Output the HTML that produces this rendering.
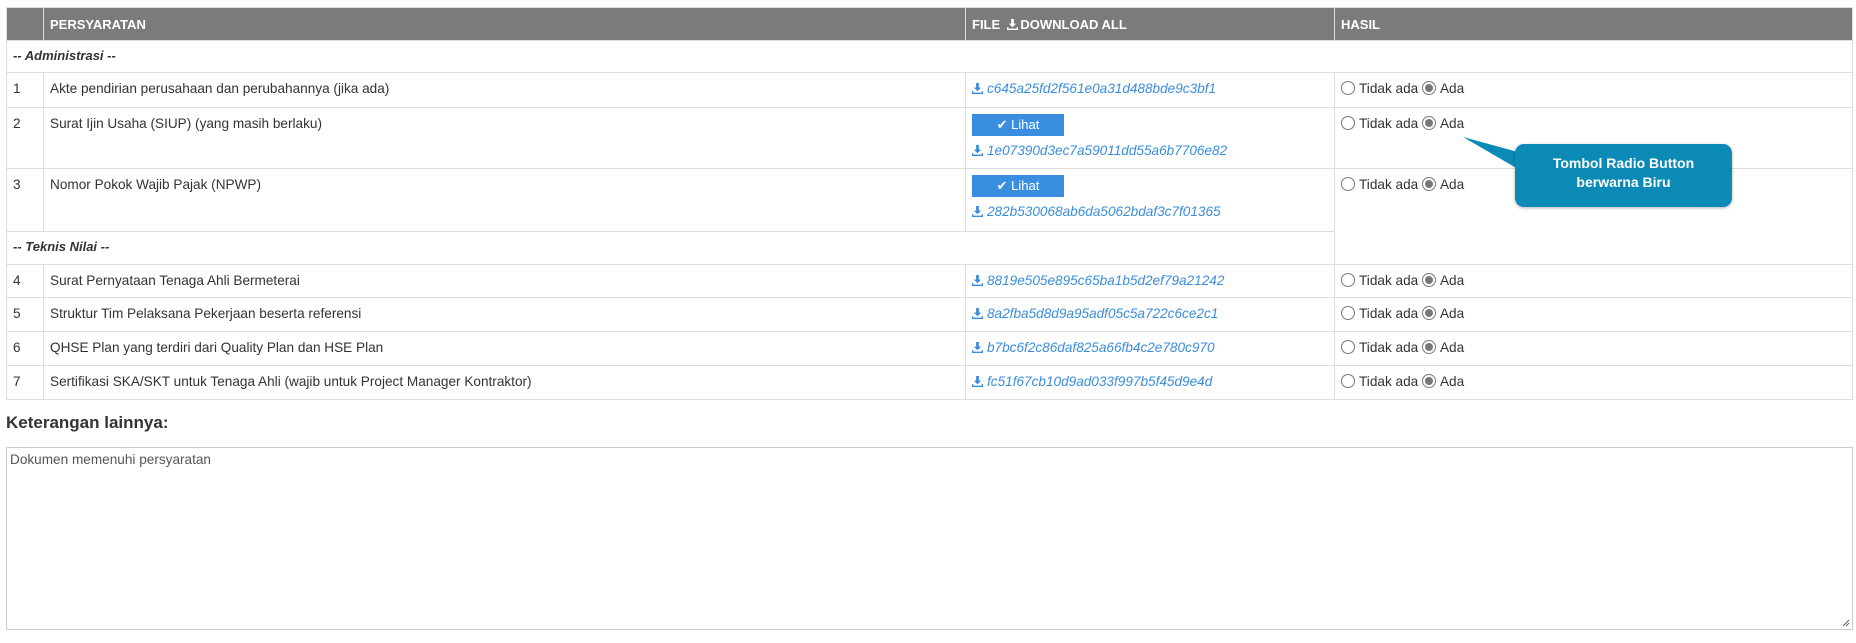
<!DOCTYPE html>
<html><head><meta charset="utf-8"><style>
*{box-sizing:border-box;margin:0;padding:0}
body{width:1856px;height:643px;background:#fff;font-family:"Liberation Sans",Arial,sans-serif;font-size:13.6px;color:#333;position:relative;overflow:hidden}
table{position:absolute;left:6px;top:7px;width:1847px;border-collapse:collapse;table-layout:fixed}
td,th{border:1px solid #ddd;padding:0 6px;vertical-align:top;text-align:left}
th{background:#7b7b7b;color:#fff;font-size:13px;font-weight:bold;height:33px;vertical-align:middle;border-color:#ddd}
td{padding-top:8px}
.sec td{font-weight:bold;font-style:italic;font-size:13px;padding-top:7px}
a{color:#3a8ddc;font-style:italic;text-decoration:none;font-size:13.6px}
.dl{display:inline-block;width:11px;height:11px;vertical-align:-1px;margin-right:4px}
.btn{display:block;width:92px;height:22px;background:#3a8ee0;color:#fff;font-size:13px;text-align:center;line-height:22px;margin:-2px 0 7px 0}
.r{display:inline-block;width:14px;height:14px;border:1px solid #777;border-radius:50%;vertical-align:-2px;margin-right:4px;position:relative;background:#fff}
.r.on::after{content:"";position:absolute;left:2px;top:2px;width:8px;height:8px;border-radius:50%;background:#777}
.hasil{padding-left:6px}
h4{position:absolute;left:6px;top:413px;font-size:17px;font-weight:bold;color:#333}
.ta{position:absolute;left:6px;top:447px;width:1847px;height:183px;border:1px solid #ccc;padding:4px 3px;color:#555;font-size:13.6px}
.tip{position:absolute;left:1515px;top:144px;width:217px;height:63px;background:#0b8ab6;border-radius:9px;color:#fff;font-weight:bold;font-size:14px;text-align:center;line-height:19px;padding-top:10px;box-shadow:0 1px 3px rgba(0,0,0,.3)}
</style></head><body>
<svg width="0" height="0" style="position:absolute"><defs><symbol id="d" viewBox="0 0 12 12"><path d="M4.5 0h3v5h2.5L6 9 2 5h2.5z M0 9h1.5v1.5h9V9H12v3H0z" fill="#3a8ddc"/></symbol></defs></svg>
<table>
<colgroup><col style="width:37px"><col style="width:922px"><col style="width:369px"><col></colgroup>
<tr><th></th><th>PERSYARATAN</th><th>FILE &nbsp;<svg class="dl" viewBox="0 0 12 12" style="margin-right:2px"><path d="M4.5 0h3v5h2.5L6 9 2 5h2.5z M0 9h1.5v1.5h9V9H12v3H0z" fill="#fff"/></svg>DOWNLOAD ALL</th><th>HASIL</th></tr>
<tr class="sec" style="height:32px"><td colspan="4">-- Administrasi --</td></tr>
<tr style="height:35px"><td>1</td><td>Akte pendirian perusahaan dan perubahannya (jika ada)</td><td><a><svg class="dl"><use href="#d"/></svg>c645a25fd2f561e0a31d488bde9c3bf1</a></td><td class="hasil"><span class="r"></span>Tidak ada <span class="r on"></span>Ada</td></tr>
<tr style="height:61px"><td>2</td><td>Surat Ijin Usaha (SIUP) (yang masih berlaku)</td><td><span class="btn">✔ Lihat</span><a><svg class="dl"><use href="#d"/></svg>1e07390d3ec7a59011dd55a6b7706e82</a></td><td class="hasil"><span class="r"></span>Tidak ada <span class="r on"></span>Ada</td></tr>
<tr style="height:63px"><td>3</td><td>Nomor Pokok Wajib Pajak (NPWP)</td><td><span class="btn">✔ Lihat</span><a><svg class="dl"><use href="#d"/></svg>282b530068ab6da5062bdaf3c7f01365</a></td><td class="hasil" style="border-bottom:none"><span class="r"></span>Tidak ada <span class="r on"></span>Ada</td></tr>
<tr class="sec" style="height:33px"><td colspan="3">-- Teknis Nilai --</td><td style="border-top:none;border-bottom:1px solid #ddd;border-left:1px solid #ddd;border-right:1px solid #ddd"></td></tr>
<tr style="height:33px"><td>4</td><td>Surat Pernyataan Tenaga Ahli Bermeterai</td><td><a><svg class="dl"><use href="#d"/></svg>8819e505e895c65ba1b5d2ef79a21242</a></td><td class="hasil"><span class="r"></span>Tidak ada <span class="r on"></span>Ada</td></tr>
<tr style="height:34px"><td>5</td><td>Struktur Tim Pelaksana Pekerjaan beserta referensi</td><td><a><svg class="dl"><use href="#d"/></svg>8a2fba5d8d9a95adf05c5a722c6ce2c1</a></td><td class="hasil"><span class="r"></span>Tidak ada <span class="r on"></span>Ada</td></tr>
<tr style="height:34px"><td>6</td><td>QHSE Plan yang terdiri dari Quality Plan dan HSE Plan</td><td><a><svg class="dl"><use href="#d"/></svg>b7bc6f2c86daf825a66fb4c2e780c970</a></td><td class="hasil"><span class="r"></span>Tidak ada <span class="r on"></span>Ada</td></tr>
<tr style="height:34px"><td>7</td><td>Sertifikasi SKA/SKT untuk Tenaga Ahli (wajib untuk Project Manager Kontraktor)</td><td><a><svg class="dl"><use href="#d"/></svg>fc51f67cb10d9ad033f997b5f45d9e4d</a></td><td class="hasil"><span class="r"></span>Tidak ada <span class="r on"></span>Ada</td></tr>
</table>
<svg style="position:absolute;left:1460px;top:134px" width="70" height="40"><path d="M3 3 L58 18 L58 35 Z" fill="#0b8ab6"/></svg>
<div class="tip">Tombol Radio Button<br>berwarna Biru</div>
<h4>Keterangan lainnya:</h4>
<div class="ta">Dokumen memenuhi persyaratan
<svg style="position:absolute;right:2px;bottom:2px" width="8" height="8"><path d="M1 7L7 1M4 7L7 4" stroke="#666" stroke-width="1"/></svg></div>
</body></html>
